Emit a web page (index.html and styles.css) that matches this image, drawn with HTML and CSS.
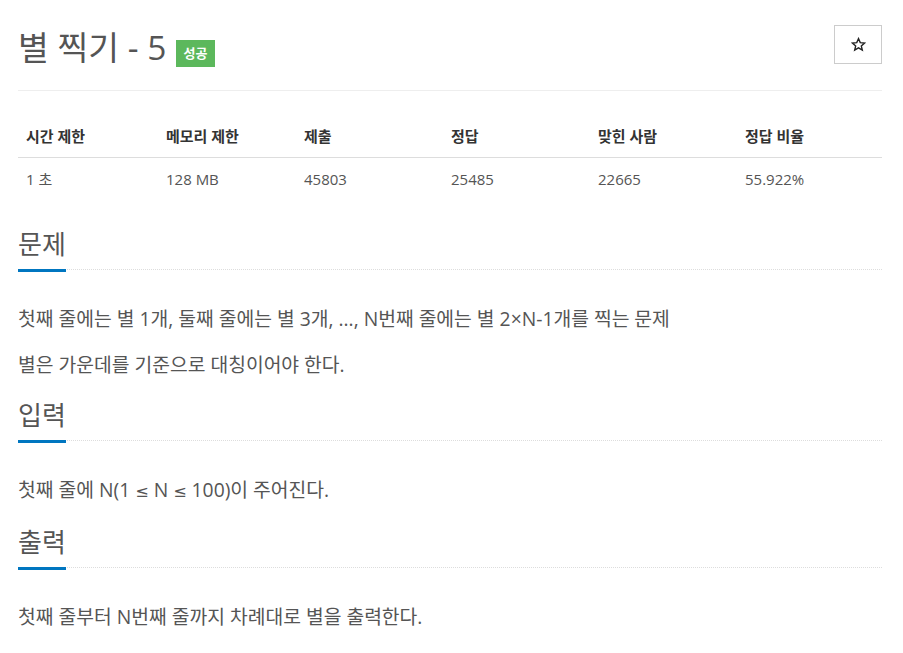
FILE: index.html
```html
<!DOCTYPE html>
<html lang="ko">
<head>
  <meta charset="UTF-8">
  <title>별 찍기 - 5</title>
  <meta name="viewport" content="width=device-width,initial-scale=1.0">
  <link rel="stylesheet" href="styles.css">
</head>
<body>
<div class="container">
  <div class="page-header">
    <h1 class="title">
      <span class="title-text">별 찍기 - 5</span>
      <span class="label-success">성공</span>
    </h1>
    <button class="btn-star" type="button">
      <svg width="15" height="15" viewBox="0 0 24 24">
        <path d="M12 2.6l2.8 6.4 6.9.6-5.2 4.6 1.6 6.8L12 17.4 5.9 21l1.6-6.8L2.3 9.6l6.9-.6z" fill="none" stroke="#222" stroke-width="2.2" stroke-linejoin="miter"/>
      </svg>
    </button>
  </div>

  <table class="info">
    <thead>
      <tr>
        <th class="c1">시간 제한</th>
        <th class="c2">메모리 제한</th>
        <th class="c3">제출</th>
        <th class="c4">정답</th>
        <th class="c5">맞힌 사람</th>
        <th class="c6">정답 비율</th>
      </tr>
    </thead>
    <tbody>
      <tr>
        <td>1 초</td>
        <td>128 MB</td>
        <td>45803</td>
        <td>25485</td>
        <td>22665</td>
        <td>55.922%</td>
      </tr>
    </tbody>
  </table>

  <section class="problem-section first">
    <div class="headline"><h2>문제</h2></div>
    <p>첫째 줄에는 별 1개, 둘째 줄에는 별 3개, ..., N번째 줄에는 별 2×N-1개를 찍는 문제</p>
    <p>별은 가운데를 기준으로 대칭이어야 한다.</p>
  </section>

  <section class="problem-section">
    <div class="headline"><h2>입력</h2></div>
    <p>첫째 줄에 N(1 <span class="sym">≤</span> N <span class="sym">≤</span> 100)이 주어진다.</p>
  </section>

  <section class="problem-section">
    <div class="headline"><h2>출력</h2></div>
    <p>첫째 줄부터 N번째 줄까지 차례대로 별을 출력한다.</p>
  </section>
</div>
</body>
</html>
```

FILE: styles.css
```css
*{
  box-sizing: border-box;
}
body{
  margin: 0;
  font-family: "Open Sans", "Noto Sans CJK KR", sans-serif;
  color: #555;
  background: #fff;
}
.container{
  width: 864px;
  margin-left: 18px;
}

/* header */
.page-header{
  display: flex;
  justify-content: space-between;
  align-items: flex-start;
  padding: 25px 0 25px;
  border-bottom: 1px solid #eee;
}
.title{
  display: flex;
  align-items: flex-end;
  margin: 4px 0 0;
  font-size: 33.5px;
  font-weight: 400;
  line-height: 36px;
  color: #555;
}
.label-success{
  margin: 0 0 -2px 9px;
  padding: 0 8px;
  height: 27px;
  line-height: 27px;
  font-size: 13px;
  font-weight: 700;
  color: #fff;
  background: #5cb85c;
}
.btn-star{
  width: 48px;
  height: 39px;
  padding: 0;
  display: flex;
  align-items: center;
  justify-content: center;
  background: #fff;
  border: 1px solid #ccc;
}

/* info table */
.info{
  width: 100%;
  margin-top: 24px;
  border-collapse: collapse;
  font-size: 15px;
}
.info th,
.info td{
  padding: 8px;
  line-height: 26px;
  text-align: left;
}
.info th{
  font-weight: 700;
  color: #333;
  border-bottom: 1px solid #ddd;
}
.info td{
  color: #555;
}
.c1{ width: 140px; }
.c2{ width: 138px; }
.c3{ width: 147px; }
.c4{ width: 147px; }
.c5{ width: 147px; }

/* sections (p margin collapses with this) */
.problem-section{
  margin-top: 22px;
}
.problem-section.first{
  margin-top: 31px;
}
.headline{
  display: flex;
  border-bottom: 1px dotted #ddd;
  margin-bottom: 34px;
}
.headline h2{
  margin: 0 0 -3px;
  padding-bottom: 12px;
  font-size: 26px;
  font-weight: 400;
  line-height: 26px;
  color: #555;
  border-bottom: 3px solid #0076c0;
}
.problem-section p{
  margin: 0 0 16px;
  font-size: 19.3px;
  line-height: 30px;
}
.sym{
  font-family: "DejaVu Sans", sans-serif;
  font-size: 16px;
}
```
